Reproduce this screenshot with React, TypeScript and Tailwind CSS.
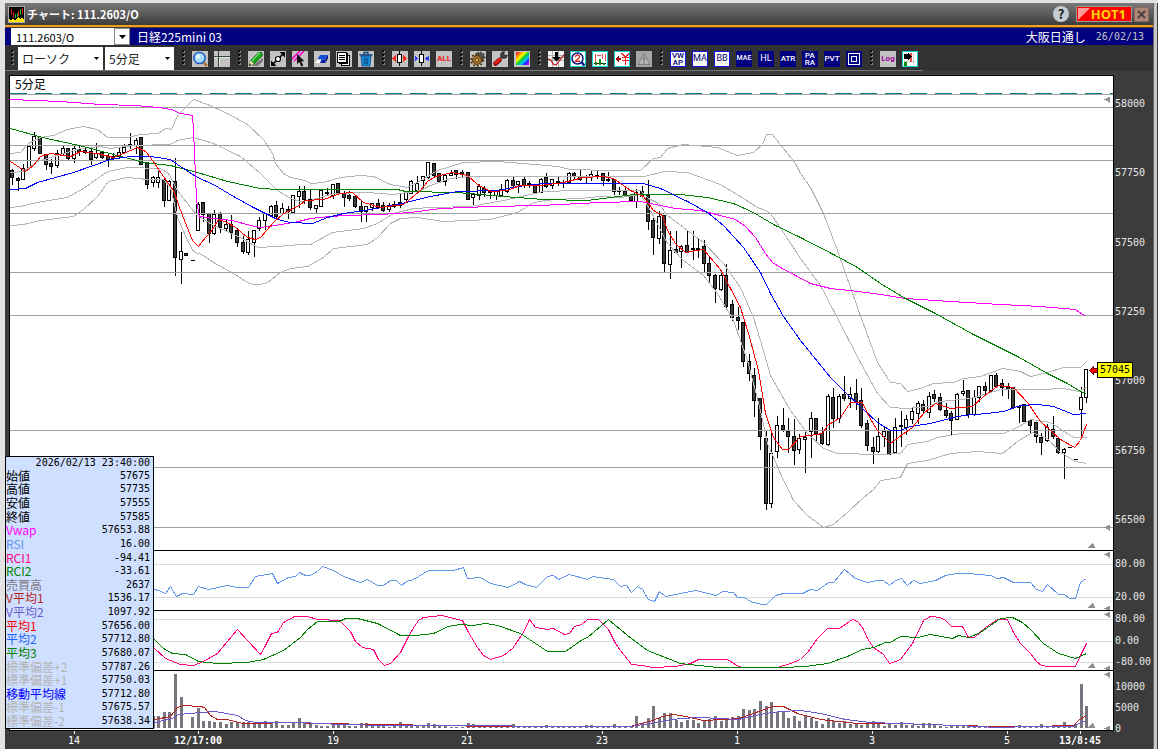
import React from "react";

type Candle = [high: number, top: number, bottom: number, low: number, down: number];

const FIRST_BAR = -33;
const barX = (i: number) => Math.floor(198 + 5.625 * i);

const candles: Candle[] = [
  [168, 170, 177, 184, 1], [176, 178, 180, 190, 1], [163, 168, 179, 179, 0], [144, 146, 167, 167, 0],
  [131, 136, 148, 150, 0], [136, 137, 153, 153, 1], [153, 154, 164, 169, 1], [158, 163, 166, 173, 1],
  [149, 153, 165, 167, 0], [145, 148, 153, 154, 0], [147, 148, 158, 160, 1], [143, 148, 158, 162, 0],
  [144, 149, 151, 155, 1], [147, 150, 152, 153, 1], [147, 151, 159, 164, 1], [142, 153, 157, 158, 0],
  [150, 152, 157, 158, 1], [153, 156, 159, 166, 1], [152, 156, 158, 160, 1], [147, 152, 156, 158, 0],
  [143, 147, 152, 153, 0], [132, 144, 145, 148, 1], [137, 140, 145, 153, 0], [136, 137, 164, 164, 1],
  [161, 162, 184, 188, 1], [175, 177, 182, 186, 0], [170, 177, 182, 187, 0], [176, 179, 200, 206, 1],
  [179, 181, 200, 200, 0], [157, 181, 257, 275, 1], [231, 251, 259, 283, 0], [253, 253, 255, 255, 1],
  [260, 260, 260, 260, 1], [201, 204, 230, 230, 0], [201, 202, 214, 221, 1], [212, 213, 233, 242, 1],
  [209, 214, 233, 234, 0], [211, 213, 227, 232, 1], [219, 224, 228, 231, 0], [214, 224, 232, 238, 1],
  [227, 230, 242, 246, 1], [235, 242, 251, 253, 1], [230, 239, 252, 254, 0], [229, 230, 242, 256, 0],
  [216, 220, 228, 230, 0], [212, 213, 220, 229, 0], [204, 206, 215, 216, 0], [200, 205, 216, 218, 1],
  [202, 208, 213, 214, 0], [205, 209, 211, 218, 1], [194, 195, 212, 213, 0], [185, 191, 196, 207, 0],
  [185, 191, 199, 203, 1], [188, 199, 207, 209, 1], [205, 205, 208, 213, 0], [189, 190, 206, 206, 0],
  [187, 192, 193, 195, 1], [183, 184, 195, 198, 0], [183, 183, 192, 193, 1], [190, 193, 197, 206, 1],
  [190, 195, 198, 200, 1], [195, 196, 206, 207, 1], [200, 206, 211, 221, 1], [206, 206, 211, 221, 0],
  [202, 203, 207, 210, 0], [198, 203, 207, 208, 1], [201, 205, 210, 211, 1], [202, 205, 209, 211, 0],
  [200, 204, 206, 207, 1], [192, 202, 205, 207, 1], [190, 192, 199, 200, 0], [179, 181, 193, 193, 0],
  [175, 183, 190, 192, 0], [175, 176, 180, 188, 0], [162, 162, 177, 178, 0], [162, 163, 175, 177, 1],
  [173, 173, 181, 181, 1], [173, 175, 181, 185, 0], [169, 173, 175, 175, 0], [170, 170, 174, 178, 1],
  [169, 172, 174, 176, 1], [172, 172, 199, 199, 1], [193, 194, 197, 205, 0], [183, 186, 195, 199, 0],
  [185, 188, 192, 196, 1], [190, 191, 192, 198, 1], [190, 191, 195, 199, 0], [183, 189, 195, 195, 0],
  [178, 180, 191, 192, 0], [175, 180, 185, 186, 1], [180, 181, 184, 192, 0], [176, 179, 185, 187, 1],
  [180, 183, 184, 187, 1], [185, 185, 192, 192, 1], [177, 179, 192, 192, 0], [172, 177, 186, 187, 1],
  [179, 179, 185, 188, 0], [176, 181, 182, 185, 1], [179, 182, 183, 187, 1], [171, 173, 182, 183, 0],
  [171, 173, 176, 178, 1], [169, 176, 179, 180, 1], [174, 176, 177, 183, 1], [169, 174, 176, 180, 0],
  [169, 175, 176, 178, 1], [173, 173, 180, 185, 1], [171, 179, 180, 181, 1], [178, 179, 191, 194, 1],
  [186, 190, 191, 194, 1], [187, 191, 195, 195, 1], [194, 195, 200, 201, 1], [188, 192, 201, 207, 0],
  [185, 191, 196, 198, 1], [179, 195, 221, 229, 1], [217, 220, 237, 254, 1], [210, 216, 238, 243, 0],
  [215, 215, 263, 271, 1], [230, 250, 264, 278, 0], [230, 249, 252, 253, 1], [244, 246, 251, 267, 0],
  [230, 245, 252, 252, 1], [230, 248, 249, 259, 1], [237, 248, 249, 257, 1], [239, 246, 263, 272, 1],
  [256, 263, 275, 282, 1], [273, 275, 288, 302, 1], [269, 275, 289, 290, 0], [263, 275, 306, 307, 1],
  [299, 304, 317, 320, 1], [306, 317, 320, 329, 1], [321, 322, 361, 366, 1], [353, 361, 373, 380, 1],
  [367, 375, 400, 416, 1], [397, 398, 436, 449, 1], [430, 438, 503, 509, 1], [432, 453, 503, 507, 0],
  [415, 425, 451, 457, 0], [407, 425, 429, 431, 1], [417, 431, 436, 452, 1], [418, 436, 450, 464, 1],
  [433, 438, 449, 453, 0], [430, 437, 439, 472, 0], [411, 418, 431, 457, 0], [417, 418, 433, 442, 1],
  [426, 433, 443, 444, 1], [393, 396, 444, 445, 0], [387, 397, 418, 427, 1], [393, 396, 418, 422, 0],
  [375, 394, 398, 400, 1], [386, 394, 398, 407, 0], [378, 393, 401, 409, 1], [387, 400, 425, 427, 1],
  [419, 423, 445, 450, 1], [436, 447, 451, 463, 1], [417, 436, 451, 452, 0], [425, 431, 436, 446, 0],
  [429, 430, 454, 454, 1], [417, 427, 452, 453, 0], [410, 425, 426, 446, 1], [414, 419, 427, 434, 0],
  [407, 411, 419, 423, 0], [400, 403, 413, 423, 0], [399, 404, 410, 413, 1], [391, 396, 412, 417, 0],
  [389, 394, 398, 401, 1], [392, 397, 409, 410, 1], [402, 410, 415, 417, 1], [410, 413, 420, 435, 1],
  [392, 394, 419, 419, 0], [379, 391, 393, 395, 0], [389, 390, 414, 417, 1], [389, 397, 414, 415, 0],
  [385, 386, 397, 401, 0], [381, 386, 390, 395, 1], [374, 375, 390, 391, 0], [372, 375, 386, 387, 1],
  [378, 383, 387, 395, 1], [382, 387, 389, 398, 1], [386, 387, 407, 408, 1], [404, 406, 407, 422, 1],
  [404, 404, 421, 421, 1], [419, 420, 425, 432, 1], [422, 422, 436, 442, 1], [432, 437, 442, 454, 1],
  [423, 427, 440, 441, 0], [415, 429, 436, 438, 1], [436, 438, 452, 453, 1], [447, 449, 452, 478, 0],
  [447, 447, 447, 447, 1], [459, 459, 459, 459, 1], [386, 397, 409, 437, 0], [369, 369, 397, 402, 0],
];

const overlays = [
  { color: "#b4b4b4", points: "10,153 20,152 28,143 40,137 53,135 67,129 83,126 97,129 107,137 127,137 140,134 158,133 165,128 171,129 177,115 187,105 193,99 207,104 227,113 247,124 263,139 272,153 275,163 283,173 290,177 305,180 310,183 323,182 340,177 360,175 373,176 390,184 407,187 420,180 437,170 463,162 497,161 523,163 557,166 570,169 610,170 640,170 653,158 660,157 667,148 683,144 717,147 737,155 753,152 762,144 766,134 772,134 783,148 795,163 800,173 810,187 823,213 837,250 857,307 877,362 890,382 900,383 907,391 920,388 933,383 953,382 963,378 980,376 1002,368 1020,371 1030,376 1047,372 1063,367 1080,367 1086,361" },
  { color: "#b4b4b4", points: "10,172 23,171 37,161 50,157 80,148 100,146 110,148 133,145 170,144 177,140 193,137 213,143 240,156 260,173 277,190 290,198 300,201 310,200 333,193 367,192 393,194 420,190 430,185 450,178 470,176 523,176 590,176 643,176 665,171 687,172 720,184 743,198 757,207 765,210 770,213 783,232 800,258 820,285 847,337 860,362 877,393 890,407 907,408 927,406 940,401 970,398 987,393 1000,389 1040,389 1063,388 1078,391 1086,387" },
  { color: "#b4b4b4", points: "10,207 20,206 37,202 67,197 83,188 107,171 127,167 160,168 168,173 177,190 190,207 197,215 213,225 240,237 257,247 277,246 300,244 310,244 332,232 363,228 377,223 393,213 413,208 433,207 470,206 503,200 543,191 577,190 640,190 648,198 658,203 667,215 687,230 703,242 723,263 740,287 753,317 760,340 770,375 790,410 807,433 823,448 837,453 880,454 900,453 907,444 927,441 937,437 960,433 1003,433 1017,427 1030,419 1050,422 1073,437 1086,437" },
  { color: "#b4b4b4", points: "10,225 23,224 40,220 73,216 83,209 97,196 108,181 127,177 147,179 163,179 170,187 177,217 187,240 193,251 203,255 213,262 233,273 247,282 253,284 260,284 267,282 280,272 290,268 307,266 323,257 333,248 367,244 377,237 390,223 400,218 417,217 443,221 490,219 517,212 533,202 553,199 580,198 600,196 620,197 640,194 650,210 667,243 683,260 703,275 717,293 733,320 747,360 760,410 767,443 780,473 793,500 807,515 823,527 833,524 847,512 863,497 873,489 880,480 900,477 907,463 927,460 950,453 977,451 1002,453 1017,441 1032,432 1047,438 1060,452 1075,461 1086,463" },
  { color: "#ff00ff", points: "10,99 60,101 100,104 135,105 158,107 171,109 180,113 192,115 193,130 195,175 196,200 199,217 201,216 212,218 232,220 250,225 260,227 275,225 298,221 310,218 330,216 345,215 380,214 410,212 440,208 490,206 540,205 600,202 640,201 660,205 675,208 700,210 712,213 720,215 735,219 745,226 755,237 765,253 772,262 780,267 795,275 810,283 830,288 858,291 880,294 905,298 950,301 1000,304 1040,306 1075,309 1082,314 1085,315" },
  { color: "#008000", points: "10,128 42,137 83,146 113,154 136,160 143,162 170,165 197,172 227,181 260,188 278,189 397,189 405,191 457,192 503,196 543,199 587,200 610,197 633,194 680,194 707,197 733,203 753,212 773,224 800,237 833,254 857,267 880,283 903,297 933,312 973,334 1017,356 1047,373 1067,383 1080,391 1086,393" },
  { color: "#0000ff", points: "10,189 25,188 37,182 73,172 110,159 130,156 150,156 170,159 177,164 197,177 213,184 233,196 253,207 277,219 290,222 312,223 327,217 343,213 370,209 397,204 430,196 457,191 497,190 517,186 543,183 617,183 643,183 660,188 687,201 707,212 723,225 743,247 760,272 770,293 783,316 800,340 830,377 847,394 877,422 890,430 900,430 910,426 930,423 953,417 963,415 987,413 1003,411 1020,405 1037,404 1053,406 1073,414 1086,413" },
  { color: "#ff0000", points: "10,161 25,171 33,165 40,156 50,153 70,156 80,151 97,153 113,157 123,153 137,147 145,151 150,157 163,176 173,190 182,215 192,240 198,246 205,237 210,232 218,219 227,222 235,227 247,237 255,239 260,237 273,222 282,214 300,204 305,200 323,199 340,193 352,192 363,202 380,207 403,204 420,190 427,181 435,176 452,172 467,175 477,184 490,191 507,190 520,185 540,185 563,182 583,177 603,176 613,178 630,190 643,196 653,210 662,215 667,230 675,243 685,252 703,249 720,269 730,288 740,307 748,333 758,370 765,413 773,437 782,449 788,449 800,436 810,435 822,433 827,425 840,417 850,402 862,402 868,415 877,430 890,443 902,434 912,427 923,413 935,403 950,408 972,406 983,396 998,385 1013,387 1027,402 1040,421 1060,439 1074,447 1080,440 1086,424" },
];

const rsi =
  "154,589 158,590 165,593 170,586 176,596 182,593 193,594 198,586 208,589 227,585 237,587 248,587 255,576 272,573 277,583 288,577 295,576 299,572 305,575 310,575 317,571 322,566 333,570 343,576 360,582 367,579 377,585 383,585 390,580 396,580 401,585 406,581 413,579 428,570 453,570 463,567 467,578 480,577 490,583 508,587 519,581 525,584 536,587 547,576 553,575 558,579 569,574 587,579 592,576 613,579 620,586 626,585 631,592 637,586 642,589 648,599 654,601 659,591 665,596 695,590 716,595 722,591 733,592 737,597 744,597 750,601 761,604 766,604 775,595 783,593 802,593 810,589 817,590 828,582 833,582 844,569 855,578 867,582 877,580 883,580 889,585 895,580 901,578 907,585 913,580 920,583 935,580 945,575 957,573 968,573 990,575 997,578 1003,577 1013,582 1030,582 1036,589 1042,591 1047,584 1058,594 1064,594 1069,598 1075,598 1080,582 1086,578";

const rci1 =
  "154,648 165,658 180,664 193,665 203,661 217,653 237,629 247,640 260,654 265,645 271,633 277,632 283,622 294,616 307,616 317,619 339,620 350,631 355,641 362,647 373,649 378,659 384,665 390,663 400,652 408,636 414,626 418,620 423,617 441,615 462,620 468,632 477,647 483,655 490,659 503,655 512,648 523,632 529,619 535,627 547,629 553,628 564,634 569,633 574,626 581,624 587,619 598,619 608,629 615,643 620,650 631,664 642,665 652,667 675,666 690,663 698,659 727,659 738,666 743,667 777,667 790,663 800,659 807,652 817,638 827,628 839,628 852,619 857,621 862,627 867,638 873,647 883,654 889,663 895,661 900,659 912,643 923,620 930,616 940,617 945,620 951,626 962,626 968,637 974,637 985,627 997,619 1007,619 1013,632 1020,643 1030,653 1036,661 1041,665 1048,666 1075,666 1080,655 1086,643";

const rci2 =
  "154,639 163,648 172,653 185,654 198,661 217,663 247,662 263,659 283,650 300,637 307,629 317,621 339,621 345,618 357,618 377,623 400,635 415,635 433,633 448,626 460,624 472,625 485,623 497,625 520,633 547,651 565,651 582,639 587,637 608,619 627,635 647,650 680,663 717,667 782,667 805,666 827,663 847,656 862,649 873,647 885,642 890,642 900,636 917,637 930,634 952,638 958,635 968,637 980,632 1000,618 1012,617 1022,622 1030,629 1043,643 1058,653 1075,658 1086,653";

const FIRST_VOLUME = -8;
const volumes = [
  12, 12, 16, 16, 54, 31, 0, 11, 20, 7, 7, 6, 6, 4, 6, 6, 6, 6, 6, 6, 7, 6, 7, 3, 3, 5, 10, 5, 5, 3, 2, 2, 4, 4, 5, 2,
  2, 5, 5, 2, 2, 2, 1, 2, 6, 3, 2, 3, 3, 5, 4, 2, 2, 1, 1, 1, 5, 4, 3, 2, 2, 3, 2, 3, 4, 2, 2, 1, 2, 1, 3, 2, 2, 1, 1,
  2, 2, 3, 3, 1, 2, 1, 4, 2, 2, 2, 12, 5, 10, 22, 10, 15, 15, 8, 6, 8, 8, 5, 8, 9, 12, 7, 9, 11, 12, 19, 18, 19, 27,
  22, 26, 16, 16, 10, 12, 7, 13, 10, 7, 4, 10, 7, 5, 7, 4, 4, 3, 4, 7, 5, 2, 5, 3, 6, 3, 3, 2, 5, 5, 4, 2, 1, 2, 3, 2,
  2, 2, 2, 2, 1, 1, 1, 1, 1, 3, 1, 1, 1, 4, 2, 2, 2, 6, 1, 4, 44, 22,
];
const volumeMa1 =
  "154,719 170,716 177,707 183,705 200,706 204,707 210,715 217,719 227,719 242,723 300,722 310,723 387,724 490,726 630,726 637,724 652,720 662,716 673,714 685,716 703,720 723,719 738,718 753,713 772,706 783,706 797,713 820,719 857,723 897,723 957,725 997,726 1030,726 1073,725 1078,720 1086,715";
const volumeMa2 =
  "154,722 172,718 178,714 200,712 215,711 237,715 245,720 255,722 300,722 340,724 387,725 630,726 650,723 665,720 680,718 700,717 738,719 750,716 765,713 780,711 800,710 820,713 845,719 870,722 957,725 997,727 1030,726 1073,726 1078,723 1086,720";

const LEFT = 9;
const SPAN = 1104;

function Pane({ top, height, className, label, children }: {
  top: number; height: number; className: string; label: string; children: React.ReactNode;
}) {
  return (
    <svg
      role="img"
      aria-label={label}
      viewBox={`${LEFT + 0.5} ${top - 0.5} ${SPAN - 1} ${height}`}
      preserveAspectRatio="none"
      shapeRendering="crispEdges"
      fill="none"
      className={className}
    >
      {children}
    </svg>
  );
}

function GridLines({ ys, color }: { ys: number[]; color: string }) {
  return (
    <g stroke={color}>
      {ys.map((y) => (
        <line key={y} x1={LEFT} x2={LEFT + SPAN} y1={y} y2={y} />
      ))}
    </g>
  );
}

const leftMark = (y: number) => `M1104 ${y} L1109 ${y - 3} V${y + 3} Z`;
const upMark = (y: number) => `M1092 ${y - 3} L1095 ${y + 2} H1088 Z`;

function AxisLabels({ values, className }: { values: string[]; className: string }) {
  return (
    <div className={`flex w-[39px] shrink-0 flex-col justify-between whitespace-nowrap pl-px font-['DejaVu_Sans_Mono'] text-[10px] leading-3 text-[#e6e6e6] ${className}`}>
      {values.map((v) => (
        <span key={v}>{v}</span>
      ))}
    </div>
  );
}

const readings: [string, string, string][] = [
  ["始値", "57675", "text-black"],
  ["高値", "57735", "text-black"],
  ["安値", "57555", "text-black"],
  ["終値", "57585", "text-black"],
  ["Vwap", "57653.88", "text-[#ff00ff]"],
  ["RSI", "16.00", "text-[#6495ed]"],
  ["RCI1", "-94.41", "text-[#ff007f]"],
  ["RCI2", "-33.61", "text-[#008000]"],
  ["売買高", "2637", "text-[#78757f]"],
  ["V平均1", "1536.17", "text-[#b22222]"],
  ["V平均2", "1097.92", "text-[#6a5acd]"],
  ["平均1", "57656.00", "text-[#ff0000]"],
  ["平均2", "57712.80", "text-[#1e64ff]"],
  ["平均3", "57680.07", "text-[#008000]"],
  ["標準偏差+2", "57787.26", "text-[#b4b4b4]"],
  ["標準偏差+1", "57750.03", "text-[#b4b4b4]"],
  ["移動平均線", "57712.80", "text-[#0000ff]"],
  ["標準偏差-1", "57675.57", "text-[#b4b4b4]"],
  ["標準偏差-2", "57638.34", "text-[#b4b4b4]"],
];

function ReadingPanel() {
  return (
    <table className="absolute bottom-[20px] left-0 h-[273px] w-[149px] border-collapse border border-black bg-[#cfdfff] font-['DejaVu_Sans_Mono','Noto_Sans_CJK_JP',monospace] text-[10px] leading-3">
      <thead>
        <tr>
          <th colSpan={2} className="p-0 pr-[3px] text-right font-normal">2026/02/13 23:40:00</th>
        </tr>
      </thead>
      <tbody>
        {readings.map(([name, value, color]) => (
          <tr key={name}>
            <th scope="row" className={`whitespace-nowrap p-0 text-left font-['Noto_Sans_CJK_JP',sans-serif] text-[12px] font-normal leading-3 ${color}`}>{name}</th>
            <td className="p-0 pr-[3px] text-right">{value}</td>
          </tr>
        ))}
      </tbody>
    </table>
  );
}

const times = ["14", "12/17:00", "19", "21", "23", "1", "3", "5", "13/8:45"];

function Grip() {
  return (
    <svg className="ml-2 mr-[7px] h-[17px] w-[3px] shrink-0" viewBox="0 0 3 17" shapeRendering="crispEdges">
      {[0, 4, 8, 12].map((y) => (
        <g key={y}>
          <rect x="1" y={y + 1} width="2" height="2" fill="#8a8a8a" />
          <rect x="0" y={y} width="2" height="2" fill="#0a0a0a" />
        </g>
      ))}
    </svg>
  );
}

function Tool({ label, className, children }: { label: string; className?: string; children: React.ReactNode }) {
  return (
    <button
      type="button"
      aria-label={label}
      className={`flex size-4 shrink-0 items-center justify-center overflow-hidden ${className ?? "bg-[#c3c3c3]"}`}
    >
      {children}
    </button>
  );
}

function Glyph({ smooth, children }: { smooth?: boolean; children: React.ReactNode }) {
  return (
    <svg viewBox="0 0 16 16" className="size-4 shrink-0" fill="none" shapeRendering={smooth ? "auto" : "crispEdges"}>
      {children}
    </svg>
  );
}

const navy = "bg-[#000080] text-white";
const framed = "border border-[#1414e6] bg-[#fafaf0] text-[#000080]";
const tiny = "font-[Roboto] text-[8px] font-medium leading-[7px]";

function Toolbar() {
  return (
    <div className="flex h-[26px] shrink-0 items-center bg-[#323232]">
      <div className="flex h-full items-center border-b border-[#777] pr-[5px] pt-[2px]">
        <span className="-ml-[2px] flex items-center"><Grip /></span>
        <span className="relative -ml-[3px] flex">
          <select aria-label="チャート種類" className="h-[23px] w-[85px] appearance-none bg-white pl-1 text-[12px] text-[#222]">
            <option>ローソク</option>
          </select>
          <svg viewBox="0 0 5 3" className="pointer-events-none absolute right-1 top-[10px] h-[3px] w-[5px]"><path d="M0 0h5L2.5 3z" /></svg>
        </span>
        <span className="relative ml-[2px] flex">
          <select aria-label="足種" className="h-[23px] w-[69px] appearance-none bg-white pl-1 text-[12px] text-[#222]">
            <option>5分足</option>
          </select>
          <svg viewBox="0 0 5 3" className="pointer-events-none absolute right-1 top-[10px] h-[3px] w-[5px]"><path d="M0 0h5L2.5 3z" /></svg>
        </span>
        <Grip />
        <div className="flex gap-[6px]">
          <Tool label="拡大">
            <Glyph smooth>
              <path d="M11 11l4 4" stroke="#b8743a" strokeWidth="2.500" />
              <circle cx="7.500" cy="7" r="5.600" fill="#a8dcff" stroke="#1b5fc4" strokeWidth="1.500" />
              <circle cx="6" cy="5.500" r="2.200" fill="#e6f6ff" />
            </Glyph>
          </Tool>
          <Tool label="十字線">
            <Glyph><path d="M0 5.500h16M4.500 0v16" stroke="#2e4a2e" /><path d="M0 6.500h4M6 6.500h10M5.500 7v9" stroke="#e8e8e8" /></Glyph>
          </Tool>
        </div>
        <Grip />
        <div className="flex gap-[6px]">
          <Tool label="描画">
            <Glyph smooth>
              <path d="M4 15h6l5-5v-3z" fill="#777" />
              <path d="M1 14.500l1.500-5 8-8h3l1 2v1l-8.500 8.500z" fill="#18a818" stroke="#0a5c0a" strokeWidth=".8" />
              <path d="M3 9.500l8-8 1.500.5-8 8z" fill="#6fe06f" />
              <path d="M1 14.500l1.500-5 3.500 3.500z" fill="#f5e0b8" />
              <path d="M1 14.800l.7-2.300 1.600 1.600z" fill="#111" />
            </Glyph>
          </Tool>
          <Tool label="線の移動">
            <Glyph smooth>
              <path d="M3 13L13 3" stroke="#000" strokeWidth="1.600" />
              <path d="M9.500 1H15v5.500zM1 9.500V15h5.500z" fill="#000" />
              <circle cx="8" cy="8" r="2.500" fill="#fff" stroke="#000" strokeWidth="1.200" />
            </Glyph>
          </Tool>
          <Tool label="線の選択">
            <Glyph smooth>
              <path d="M0 8L8 0M2 10L12 0" stroke="#f0c" strokeWidth="1.600" />
              <path d="M5 3v10l2.300-2 2 4.500 2-1-2-4.300h3.200z" fill="#111" />
            </Glyph>
          </Tool>
          <Tool label="消しゴム">
            <Glyph smooth>
              <path d="M6 4h8l-2.500 4.500H3.500z" fill="#1550d8" />
              <path d="M14 4v3l-2.500 5V8.500z" fill="#000080" />
              <path d="M3.500 8.500h4l-1.500 3.500H1.500z" fill="#fff" /><path d="M7.500 8.500h4V12H6z" fill="#0a1fa8" />
            </Glyph>
          </Tool>
          <Tool label="コピー">
            <Glyph>
              <path d="M5.500 4.500h8v10h-8z" fill="#fff" stroke="#000" />
              <path d="M3.500 2.500h8v10h-8z" fill="#fff" stroke="#000" />
              <path d="M1.500 1.500h9v10h-9z" fill="#fff" stroke="#000" />
              <path d="M3 4.500h6M3 6.500h6M3 8.500h6" stroke="#000" />
            </Glyph>
          </Tool>
          <Tool label="削除">
            <Glyph smooth>
              <path d="M1.500 4h13M6 3.500v-2h4v2" stroke="#0b3f7a" strokeWidth="1.300" />
              <path d="M3 5h10l-1 10H4z" fill="#1c9ae8" stroke="#0b3f7a" strokeWidth=".8" />
              <path d="M6 6.500l.4 7M8 6.500v7M10 6.500l-.4 7" stroke="#0b3f7a" />
            </Glyph>
          </Tool>
        </div>
        <Grip />
        <div className="flex gap-[6px]">
          <Tool label="幅を広げる">
            <Glyph><path d="M7.500 0v15" stroke="#000" /><path d="M5.500 3.500h4v8h-4z" fill="#fff" stroke="#000" /><path d="M0 7.500l4-3.500v7zM15 7.500L11 4v7z" fill="#f03020" /></Glyph>
          </Tool>
          <Tool label="幅を狭める">
            <Glyph><path d="M7.500 0v15" stroke="#000" /><path d="M5.500 3.500h4v8h-4z" fill="#fff" stroke="#000" /><path d="M4 7.500L1 4.500v6zM11 7.500l4-3v6z" fill="#2c3cf0" /></Glyph>
          </Tool>
          <Tool label="全表示"><span className="font-[Roboto] text-[8px] font-bold leading-none text-[#f01818]">ALL</span></Tool>
        </div>
        <Grip />
        <div className="flex gap-[6px]">
          <Tool label="設定">
            <Glyph smooth>
              <circle cx="10" cy="6" r="4.500" fill="#555" stroke="#444" strokeWidth="2" strokeDasharray="1.500 1.500" />
              <circle cx="7" cy="9" r="4.500" fill="#a07030" stroke="#4f3510" />
              <circle cx="7" cy="9" r="6" stroke="#5c3d12" strokeWidth="1.800" strokeDasharray="2 1.700" />
              <circle cx="7" cy="9" r="1.800" fill="#d8a850" stroke="#4f3510" strokeWidth=".7" />
            </Glyph>
          </Tool>
          <Tool label="ツール">
            <Glyph smooth>
              <path d="M3.500 12.500l4-3.500" stroke="#700" strokeWidth="4.600" strokeLinecap="round" />
              <path d="M3.500 12l4-3.500" stroke="#e01818" strokeWidth="3" strokeLinecap="round" />
              <path d="M9 7l2-2" stroke="#222" strokeWidth="2.200" />
              <path d="M12.500.8A3.300 3.300 0 1 0 15.200 4L12.500 4.500 11.800 3z" fill="#444" stroke="#111" strokeWidth=".7" />
            </Glyph>
          </Tool>
          <Tool label="配色">
            <span className="size-[13px] bg-[linear-gradient(135deg,#f03,#f80_20%,#ff0_36%,#0c3_52%,#0cf_66%,#22f_80%,#f0f)]" />
          </Tool>
        </div>
        <Grip />
        <div className="flex gap-[6px]">
          <Tool label="発注点" className="bg-[#f0f0f0]">
            <Glyph smooth>
              <path d="M0 4.500h16M0 9.500h16M4.500 0v16M10.500 0v16" stroke="#b0b0b0" />
              <path d="M0 8l3 1 2 4 3 1 3-4 5-6" stroke="#c01818" strokeWidth="1.200" />
              <path d="M7 1h3v5h3l-4.500 4.500L4 6h3z" fill="#000" />
            </Glyph>
          </Tool>
          <Tool label="検索" className="border border-[#10d0d0] bg-white">
            <Glyph smooth>
              <path d="M11 11l3.500 3.500" stroke="#102080" strokeWidth="2.500" />
              <circle cx="7.500" cy="7.500" r="5.500" fill="#fff" stroke="#102080" strokeWidth="1.500" />
              <path d="M5.500 6c0-3 4.200-2.500 4 0-.1 1.500-3 2.500-4 4.300h4.500" stroke="#e01818" strokeWidth="1.300" />
            </Glyph>
          </Tool>
          <Tool label="出来高" className="border border-[#10d0d0] bg-white">
            <Glyph>
              <path d="M3 3v8M5 4h4M10.500 3v5M13.500 3v7" stroke="#e05050" />
              <path d="M2 12.500h12" stroke="#111" />
              <path d="M3 14v-3h2v3M7 14V8h2v6M11 14v-2h2v2" fill="#089008" />
            </Glyph>
          </Tool>
          <Tool label="損益" className="border border-[#10d0d0] bg-white">
            <Glyph>
              <path d="M1 8l4-4v8zM4 7h3v2H4z" fill="#a00010" />
              <path d="M8 6h7v1H8zM8 9h7v1H8zM11 6h1v8h-1z" fill="#f02020" />
              <path d="M8 2l3.500 4L15 2" stroke="#f02020" strokeWidth="1.500" />
            </Glyph>
          </Tool>
          <Tool label="警告" className="bg-[#a5a5a5]">
            <Glyph smooth><path d="M8 2.500L14 13.500H2z" fill="#b5b5b5" stroke="#7c7c7c" /><path d="M8 6v4M8 11v1.500" stroke="#707070" strokeWidth="1.500" /></Glyph>
          </Tool>
        </div>
        <Grip />
        <div className="flex gap-[6px]">
          <Tool label="VWAP" className={framed}><span className={tiny}>VW<br />AP</span></Tool>
          <Tool label="MA" className={framed}><span className="font-[Roboto] text-[9px] leading-none">MA</span></Tool>
          <Tool label="BB" className={framed}><span className="font-[Roboto] text-[9px] leading-none">BB</span></Tool>
          <Tool label="MAE" className={navy}><span className="font-[Roboto] text-[7px] font-medium leading-none">MAE</span></Tool>
          <Tool label="HL" className={navy}><span className="font-[Roboto] text-[9px] leading-none">HL</span></Tool>
          <Tool label="ATR" className={navy}><span className={tiny}>ATR</span></Tool>
          <Tool label="PARA" className={navy}><span className={tiny}>PA<br />RA</span></Tool>
          <Tool label="PVT" className={navy}><span className={tiny}>PVT</span></Tool>
          <Tool label="枠" className={navy}>
            <Glyph><path d="M2.500 2.500h11v11h-11zM5.500 5.500h5v5h-5z" stroke="#fff" /></Glyph>
          </Tool>
        </div>
        <Grip />
        <div className="flex gap-[6px]">
          <Tool label="Log"><span className="font-[Roboto] text-[8px] font-bold leading-none text-[#a000a0]">Log</span></Tool>
          <Tool label="終了" className="border border-[#10d0d0] bg-white">
            <Glyph>
              <path d="M2 10.500h12M11.500 2v12" stroke="#ccc" />
              <path d="M8 2h2v9H8z" fill="#f05050" />
              <path d="M2 3h4V1l4 4.500L6 10V8H2z" fill="#000" />
              <path d="M2 11h3v4H2z" fill="#089008" />
            </Glyph>
          </Tool>
        </div>
      </div>
    </div>
  );
}

export default function App() {
  return (
    <div className="flex h-screen min-h-[500px] overflow-hidden bg-[#e2e2e2] pl-[5px] pt-[3px] font-['Noto_Sans_CJK_JP',sans-serif]">
      <div className="flex min-w-0 flex-1 flex-col bg-[#3c3c3c]">
        <header className="flex h-[22px] shrink-0 items-center bg-linear-to-b from-[#7a7a7a] to-[#3c3c3c] pl-[3px] pr-1">
          <svg viewBox="0 0 17 17" className="size-[17px]" shapeRendering="crispEdges">
            <path d="M0 0h17v17H0z" fill="#aaa" />
            <path d="M1 1h15v15H1z" />
            <path d="M3 3h1v6H3zM5 6h1v6H5zM10 5h1v5h-1zM14 2h1v6h-1z" fill="#e02020" />
            <path d="M7 8h1v4H7zM12 3h1v6h-1zM9 7h1v4H9z" fill="#20c020" />
            <path d="M1 16v-3l2 1 2-1 2 1 3-3 2 2 2-1 2 2v2z" fill="#ffe800" />
          </svg>
          <h1 className="ml-[2px] flex-1 text-[11px] font-bold leading-4 text-white">チャート: 111.2603/O</h1>
          <button type="button" aria-label="ヘルプ" className="size-4 rounded-full bg-[#c4ccd4] text-[13px] font-bold leading-4 text-[#222]">?</button>
          <button type="button" className="relative ml-[7px] flex h-4 w-[56px] items-center justify-end border border-[#999] bg-[#ff0000] pr-[5px] font-['Open_Sans'] text-[13px] font-bold leading-4 text-[#ffd800]">
            <svg viewBox="0 0 12 12" className="absolute left-px top-px size-3"><path d="M0 0h12L0 12z" fill="#ff9a9a" /></svg>
            HOT1
          </button>
          <button type="button" aria-label="閉じる" className="ml-[2px] flex size-[15px] items-center justify-center border border-[#8a6a5c] bg-[#b08474]">
            <svg viewBox="0 0 9 9" className="size-[9px]"><path d="M1 1l7 7M8 1L1 8" stroke="#4a4040" strokeWidth="2" /></svg>
          </button>
        </header>
        <div className="h-[3px] shrink-0 border-t-2 border-[#f0a020] bg-[#4a4030]" />
        <div className="flex h-[17px] shrink-0 items-center bg-[#000080] pl-[6px] pr-[9px] text-[12px] leading-4 text-white">
          <input aria-label="銘柄コード" defaultValue="111.2603/O" className="h-full w-[103px] bg-white pl-[5px] text-[11px] text-black" />
          <button type="button" aria-label="銘柄選択" className="flex h-full w-4 items-center justify-center border border-[#888] bg-white">
            <svg viewBox="0 0 7 4" className="h-1 w-[7px]"><path d="M0 0h7L3.500 4z" /></svg>
          </button>
          <span className="ml-[7px] flex-1">日経225mini 03</span>
          <span>大阪日通し</span>
          <span className="ml-[10px] font-['DejaVu_Sans_Mono'] text-[10px] text-[#c4c4c4]">26/02/13</span>
        </div>
        <Toolbar />

        <main className="relative flex min-h-0 flex-1 flex-col pt-1">
          <section className="flex min-h-0 flex-1">
            <div className="ml-1 flex min-h-0 min-w-0 flex-1 flex-col border border-black bg-white">
              <h2 className="h-[17px] shrink-0 pl-[5px] text-[12px] leading-4 text-black">5分足</h2>
              <Pane top={93} height={457} className="block min-h-0 w-full flex-1" label="価格チャート">
                <line x1="9" x2="1113" y1="93" y2="93" stroke="#008080" strokeDasharray="17 8" />
                {candles.map(([high, top, bottom, low, down], n) => {
                  const x = barX(n + FIRST_BAR);
                  return (
                    <g key={n} stroke="#000">
                      <line x1={x} x2={x} y1={high} y2={low} />
                      {top === bottom ? (
                        <line x1={x - 2} x2={x + 2} y1={top} y2={top} />
                      ) : (
                        <rect x={x - 2} y={top} width="3" height={bottom - top} fill={down ? "#3c3c3c" : "#fff"} />
                      )}
                    </g>
                  );
                })}
                <GridLines ys={[94, 107, 145, 160, 213, 272, 315, 430, 467, 527]} color="#a0a0a0" />
                {overlays.map((o, n) => (
                  <polyline key={n} points={o.points} stroke={o.color} />
                ))}
                <g fill="#909090">
                  <path d={leftMark(99)} /><path d={leftMark(527)} /><path d={upMark(545)} />
                </g>
                <path d="M1089 370l4-4v2h4v4h-4v2z" fill="#f00" stroke="#600" />
              </Pane>
            </div>
            <div className="relative flex">
              <AxisLabels className="pb-[25px] pt-[23px]" values={["58000", "57750", "57500", "57250", "57000", "56750", "56500"]} />
              <output className="absolute -left-[17px] top-[287px] border border-black bg-[#ffff00] px-[2px] font-['DejaVu_Sans_Mono'] text-[10px] leading-[14px] text-black">57045</output>
            </div>
          </section>
          <section className="flex h-[60px] shrink-0">
            <div className="ml-1 flex min-w-0 flex-1 border-x border-b border-black bg-white">
              <Pane top={551} height={59} className="block h-full w-full" label="RSI">
                <GridLines ys={[564, 597]} color="#dcdcdc" />
                <polyline points={rsi} stroke="#6495ed" />
                <g fill="#909090"><path d={leftMark(554)} /><path d={leftMark(608)} /><path d={upMark(605)} /></g>
              </Pane>
            </div>
            <AxisLabels className="pb-2 pt-[7px]" values={["80.00", "20.00"]} />
          </section>
          <section className="flex h-[60px] shrink-0">
            <div className="ml-1 flex min-w-0 flex-1 border-x border-b border-black bg-white">
              <Pane top={611} height={59} className="block h-full w-full" label="RCI">
                <GridLines ys={[619, 641, 662]} color="#dcdcdc" />
                <polyline points={rci1} stroke="#ff007f" />
                <polyline points={rci2} stroke="#008000" />
                <g fill="#909090"><path d={leftMark(614)} /><path d={leftMark(668)} /><path d={upMark(665)} /></g>
              </Pane>
            </div>
            <AxisLabels className="pb-[3px] pt-[2px]" values={["80.00", "0.00", "-80.00"]} />
          </section>
          <section className="flex h-[60px] shrink-0">
            <div className="ml-1 flex min-w-0 flex-1 border-x border-b border-black bg-white">
              <Pane top={671} height={59} className="block h-full w-full" label="売買高">
                {volumes.map((v, n) => (
                  <rect key={n} x={barX(n + FIRST_VOLUME) - 1.5} y={727.5 - v} width="3" height={v} fill="#78757f" />
                ))}
                <polyline points={volumeMa1} stroke="#b22222" />
                <polyline points={volumeMa2} stroke="#6a5acd" />
                <g fill="#909090"><path d={leftMark(674)} /><path d={leftMark(728)} /><path d={upMark(725)} /></g>
              </Pane>
            </div>
            <AxisLabels className="-mb-1 pt-[10px]" values={["10000", "5000", "0"]} />
          </section>
          <footer className="ml-[7px] mr-[61px] grid h-[18px] shrink-0 grid-cols-[124fr_124fr_146fr_122fr_148fr_122fr_148fr_122fr_24fr] font-['DejaVu_Sans_Mono'] text-[10px] leading-[14px] text-white">
            {times.map((t) => (
              <div key={t} className="flex min-w-0 flex-col items-center whitespace-nowrap">
                <span className="h-[3px] w-px shrink-0 bg-white" />
                <span className={t.includes(":") ? "font-bold" : ""}>{t}</span>
              </div>
            ))}
          </footer>
          <ReadingPanel />
        </main>
      </div>
      <div className="w-[5px] shrink-0 border-x border-l-[#666] border-r-[#3c3c3c] bg-[#c8c8c8]" />
    </div>
  );
}
